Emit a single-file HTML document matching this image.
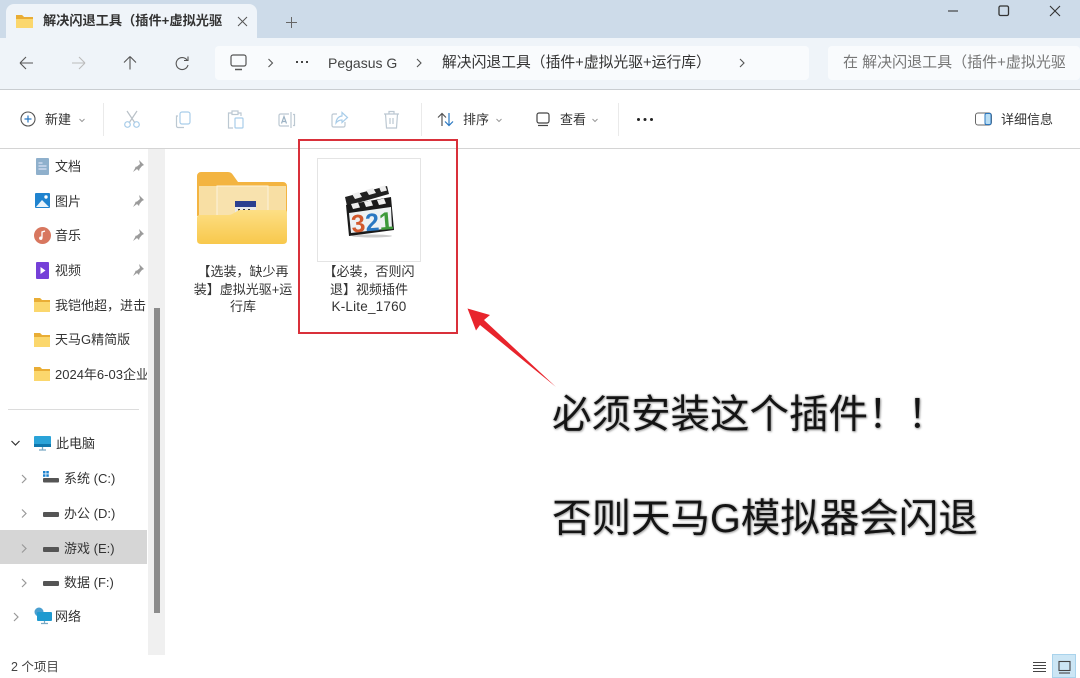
<!DOCTYPE html>
<html lang="zh"><head><meta charset="utf-8"><title>解决闪退工具</title>
<style>
html,body{margin:0;padding:0;background:#fff}
#p{position:relative;width:1080px;height:678px;overflow:hidden;background:#fff;font-family:"Liberation Sans","Noto Sans CJK SC",sans-serif;color:#2b2b2b}
.a{position:absolute}
.t{position:absolute;white-space:nowrap;font-size:13px;line-height:18px;color:#333}
svg{position:absolute;overflow:visible}
.c{text-align:center;white-space:normal;line-height:17.5px;font-size:13px}
.big{position:absolute;white-space:nowrap;font-size:39.5px;line-height:48px;color:#151515;text-shadow:0 0 2px #999,1px 1px 2px #aaa;letter-spacing:0}
</style></head><body><div id="p">
<!-- title bar -->
<div class="a" style="left:0;top:0;width:1080px;height:38px;background:#cddbe9"></div>
<div class="a" style="left:6px;top:4px;width:251px;height:34px;background:#eff4f9;border-radius:8px 8px 0 0"></div>
<svg style="left:16px;top:15px" width="17" height="13"><path d="M0 0h6l2 2h9v11H0z" fill="#fbd76d"/><path d="M0 0h6l2 2h9v2H0z" fill="#e9ad35"/></svg>
<div class="t" style="left:43px;top:12px;font-size:13.2px;font-weight:bold;color:#333">解决闪退工具（插件+虚拟光驱</div>
<svg style="left:237px;top:16px" width="11" height="11"><path d="M1 1l9 9M10 1l-9 9" stroke="#555" stroke-width="1" fill="none"/></svg>
<svg style="left:286px;top:17px" width="11" height="11"><path d="M5.500 0v11M0 5.500h11" stroke="#666" stroke-width="1" fill="none"/></svg>
<svg style="left:948px;top:5px" width="120" height="13"><path d="M0 6h10" stroke="#444" stroke-width="1.2"/><rect x="51" y="1" width="9.500" height="9.500" rx="1.500" fill="none" stroke="#333" stroke-width="1.300"/><path d="M102 1l10 10M112 1l-10 10" stroke="#333" stroke-width="1.100"/></svg>
<!-- address row -->
<div class="a" style="left:0;top:38px;width:1080px;height:51px;background:#eff4f9;border-bottom:1px solid #c9cdd1"></div>
<div class="a" style="left:215px;top:46px;width:594px;height:34px;background:#f9fbfd;border-radius:4px"></div>
<div class="a" style="left:828px;top:46px;width:252px;height:34px;background:#f9fbfd;border-radius:4px"></div>
<svg style="left:19px;top:55px" width="170" height="16" fill="none" stroke="#555" stroke-width="1.100"><path d="M1 8h13M1 8l6-6M1 8l6 6"/><path d="M53 8h13M66 8l-6-6M66 8l-6 6" stroke="#bbb"/><path d="M111 1.500v13M111 1.500l-6 6M111 1.500l6 6"/><path d="M169 5a6 6 0 1 0 1 5M170 1.500v4h-4" transform="translate(-1 0)"/></svg>
<svg style="left:230px;top:54px" width="18" height="17" fill="none" stroke="#555" stroke-width="1.200"><rect x="1" y="1" width="15" height="11" rx="2"/><path d="M5 15.500h7" stroke-width="1.500"/></svg>
<svg style="left:268px;top:58px" width="480" height="10" fill="none" stroke="#555" stroke-width="1.100"><path d="M0.500 1l4 4-4 4M149 1l4 4-4 4M472 1l4 4-4 4"/></svg>
<div class="a" style="left:296px;top:61px;width:2px;height:2px;background:#444;box-shadow:5px 0 #444,10px 0 #444"></div>
<div class="t" style="left:328px;top:54px;font-size:14px;color:#444">Pegasus G</div>
<div class="t" style="left:442px;top:54px;font-size:14.8px;color:#333">解决闪退工具（插件+虚拟光驱+运行库）</div>
<div class="a" style="left:843px;top:54px;width:222px;height:20px;overflow:hidden"><div class="t" style="left:0;top:0;font-size:15px;color:#777">在 解决闪退工具（插件+虚拟光驱+运行库）</div></div>
<!-- toolbar -->
<div class="a" style="left:0;top:148px;width:1080px;height:1px;background:#d4d4d4"></div>
<div class="a" style="left:103px;top:103px;width:1px;height:33px;background:#eaeaea"></div>
<div class="a" style="left:421px;top:103px;width:1px;height:33px;background:#eaeaea"></div>
<div class="a" style="left:618px;top:103px;width:1px;height:33px;background:#eaeaea"></div>
<svg style="left:20px;top:111px" width="16" height="16" fill="none"><circle cx="8" cy="8" r="7" stroke="#555" stroke-width="1.100"/><path d="M8 4.500v7M4.500 8h7" stroke="#2a78c2" stroke-width="1.200"/></svg>
<div class="t" style="left:45px;top:111px;font-size:13px">新建</div>
<svg style="left:79px;top:118px" width="120" height="6" fill="none" stroke="#999"><path d="M0.500 1l2.500 2.500L5.500 1"/></svg>
<svg style="left:123px;top:110px" width="18" height="19" fill="none" stroke="#a9cde9" stroke-width="1.200"><path d="M4 1l8 12M14 1l-8 12" stroke="#b9c1c8"/><circle cx="4.500" cy="14.500" r="2.800"/><circle cx="13.500" cy="14.500" r="2.800"/></svg>
<svg style="left:175px;top:111px" width="17" height="18" fill="none" stroke="#bcc8d2" stroke-width="1.200"><path d="M3 5H1.500v10a1.500 1.500 0 0 0 1.500 1.500h6"/><rect x="5" y="1" width="10" height="12" rx="2" stroke="#a9cde9"/></svg>
<svg style="left:227px;top:110px" width="18" height="19" fill="none" stroke="#bcc8d2" stroke-width="1.200"><path d="M5 3H1.500v15H6M11 3h3v3"/><rect x="5" y="1" width="6" height="3.500"/><rect x="8" y="8" width="8" height="10" rx="1" stroke="#a9cde9"/></svg>
<svg style="left:278px;top:111px" width="18" height="18" fill="none" stroke="#bcc8d2" stroke-width="1.200"><path d="M11 3H2.500A1.500 1.500 0 0 0 1 4.500v9A1.500 1.500 0 0 0 2.500 15H11M13 1v16M15 3.500h1.500v11H15"/><path d="M3.500 12.500l2.500-7 2.500 7M4.500 10.500h3.500" stroke="#9cb2c4"/></svg>
<svg style="left:331px;top:111px" width="18" height="18" fill="none" stroke="#bcc8d2" stroke-width="1.200"><path d="M6 3H2.500A1.500 1.500 0 0 0 1 4.500v10A1.500 1.500 0 0 0 2.500 16h10a1.500 1.500 0 0 0 1.500-1.500V11"/><path d="M11 1.500l5.500 5-5.500 5V9c-3 0-4.500 1-6 3 .3-4 2.500-6.500 6-7z" stroke="#a9cde9"/></svg>
<svg style="left:383px;top:110px" width="17" height="19" fill="none" stroke="#bcc8d2" stroke-width="1.200"><path d="M1 4h15M6 4V1.500h5V4M2.500 4l1 14h10l1-14M7 8v6M10 8v6"/></svg>
<svg style="left:437px;top:112px" width="18" height="15" fill="none" stroke-width="1.200"><path d="M5 14V1.500M1 5.500l4-4 4 4" stroke="#555"/><path d="M12 1v12.500M8 9.500l4 4 4-4" stroke="#2a78c2"/></svg>
<div class="t" style="left:463px;top:111px;font-size:13px">排序</div>
<svg style="left:496px;top:118px" width="7" height="5" fill="none" stroke="#999"><path d="M0.500 1l2.500 2.500L5.500 1"/></svg>
<svg style="left:536px;top:112px" width="15" height="15" fill="none" stroke="#444" stroke-width="1.200"><rect x="1" y="1" width="12" height="10" rx="2"/><path d="M2 13.500h10"/></svg>
<div class="t" style="left:560px;top:111px;font-size:13px">查看</div>
<svg style="left:592px;top:118px" width="7" height="5" fill="none" stroke="#999"><path d="M0.500 1l2.500 2.500L5.500 1"/></svg>
<div class="a" style="left:637px;top:118px;width:3px;height:3px;border-radius:50%;background:#222;box-shadow:6.500px 0 #222,13px 0 #222"></div>
<svg style="left:975px;top:112px" width="18" height="15" fill="none"><rect x="0.500" y="1" width="16" height="12" rx="2.500" stroke="#666"/><rect x="10" y="1.500" width="6" height="11" rx="1.500" fill="#b9ddf3" stroke="#2a78c2"/></svg>
<div class="t" style="left:1001px;top:111px;font-size:13px">详细信息</div>
<!-- sidebar -->
<div class="a" style="left:148px;top:149px;width:17px;height:506px;background:#f0f0f0"></div>
<div class="a" style="left:154px;top:308px;width:6px;height:305px;background:#8c8c8c"></div>
<div class="a" style="left:0;top:530px;width:147px;height:34px;background:#d6d6d6"></div>
<div class="a" style="left:8px;top:409px;width:131px;height:1px;background:#dcdcdc"></div>
<svg style="left:36px;top:158px" width="13" height="17"><rect width="13" height="17" rx="1" fill="#8fb0cc"/><path d="M2.500 5h4M2.500 8h8M2.500 11h8" stroke="#eef" /></svg>
<svg style="left:35px;top:193px" width="15" height="15"><rect width="15" height="15" rx="1" fill="#1f83cf"/><path d="M1 14l6-7 7 7z" fill="#eaf4fb"/><circle cx="11" cy="4" r="1.700" fill="#fff"/></svg>
<svg style="left:34px;top:227px" width="17" height="17"><circle cx="8.500" cy="8.500" r="8.500" fill="#d8775f"/><path d="M8 11V5l3-1" stroke="#fff" stroke-width="1.300" fill="none"/><circle cx="6.800" cy="11.200" r="1.700" fill="#fff"/></svg>
<svg style="left:36px;top:262px" width="13" height="17"><rect width="13" height="17" rx="1" fill="#7540d8"/><path d="M4.500 5v7l5-3.500z" fill="#fff"/></svg>
<svg style="left:34px;top:298px" width="16" height="14"><path d="M0 0h6l2 2h8v12H0z" fill="#fbd76d"/><path d="M0 0h6l2 2h8v2H0z" fill="#e9ad35"/></svg>
<svg style="left:34px;top:333px" width="16" height="14"><path d="M0 0h6l2 2h8v12H0z" fill="#fbd76d"/><path d="M0 0h6l2 2h8v2H0z" fill="#e9ad35"/></svg>
<svg style="left:34px;top:367px" width="16" height="14"><path d="M0 0h6l2 2h8v12H0z" fill="#fbd76d"/><path d="M0 0h6l2 2h8v2H0z" fill="#e9ad35"/></svg>
<svg style="left:132px;top:160px" width="12" height="120" fill="#9b9b9b"><path d="M7 0l5 5-2 1-2.500 3-.5 2-4-4 2-.5 3-2.500zM3.500 7.500l1.500 1.500-4 3z"/><path transform="translate(0 35)" d="M7 0l5 5-2 1-2.500 3-.5 2-4-4 2-.5 3-2.500zM3.500 7.500l1.500 1.500-4 3z"/><path transform="translate(0 69)" d="M7 0l5 5-2 1-2.500 3-.5 2-4-4 2-.5 3-2.500zM3.500 7.500l1.500 1.500-4 3z"/><path transform="translate(0 104)" d="M7 0l5 5-2 1-2.500 3-.5 2-4-4 2-.5 3-2.500zM3.500 7.500l1.500 1.500-4 3z"/></svg>
<div class="t" style="left:55px;top:158px">文档</div>
<div class="t" style="left:55px;top:193px">图片</div>
<div class="t" style="left:55px;top:227px">音乐</div>
<div class="t" style="left:55px;top:262px">视频</div>
<div class="a" style="left:55px;top:297px;width:92px;height:20px;overflow:hidden"><div class="t" style="left:0;top:0">我铠他超，进击的巨人</div></div>
<div class="t" style="left:55px;top:331px">天马G精简版</div>
<div class="a" style="left:55px;top:366px;width:92px;height:20px;overflow:hidden"><div class="t" style="left:0;top:0">2024年6-03企业版</div></div>
<svg style="left:11px;top:440px" width="10" height="7" fill="none" stroke="#333" stroke-width="1.200"><path d="M0.500 1l4 4 4-4"/></svg>
<svg style="left:34px;top:436px" width="17" height="15"><rect width="17" height="11" rx="1" fill="#2aa3d8"/><rect y="8" width="17" height="3" fill="#0f77ad"/><path d="M5 14h7M8.500 11v3" stroke="#79a9c4" stroke-width="1.300"/></svg>
<div class="t" style="left:56px;top:435px">此电脑</div>
<svg style="left:21px;top:475px" width="6" height="116" fill="none" stroke="#999" stroke-width="1.200"><path d="M1 0l4 4-4 4M1 34.500l4 4-4 4M1 69.500l4 4-4 4M1 104l4 4-4 4"/></svg>
<svg style="left:13px;top:613px" width="6" height="10" fill="none" stroke="#999" stroke-width="1.200"><path d="M1 0l4 4-4 4"/></svg>
<svg style="left:43px;top:471px" width="16" height="12"><rect x="0" y="0" width="2.500" height="2.500" fill="#1f83cf"/><rect x="3.300" y="0" width="2.500" height="2.500" fill="#1f83cf"/><rect x="0" y="3.300" width="2.500" height="2.500" fill="#1f83cf"/><rect x="3.300" y="3.300" width="2.500" height="2.500" fill="#1f83cf"/><rect y="7" width="16" height="4.500" rx="1" fill="#555"/></svg>
<div class="a" style="left:43px;top:512px;width:16px;height:5px;background:#555;border-radius:1px"></div>
<div class="a" style="left:43px;top:547px;width:16px;height:5px;background:#555;border-radius:1px"></div>
<div class="a" style="left:43px;top:581px;width:16px;height:5px;background:#555;border-radius:1px"></div>
<div class="t" style="left:64px;top:470px">系统 (C:)</div>
<div class="t" style="left:64px;top:505px">办公 (D:)</div>
<div class="t" style="left:64px;top:540px">游戏 (E:)</div>
<div class="t" style="left:64px;top:574px">数据 (F:)</div>
<svg style="left:34px;top:607px" width="18" height="18"><circle cx="5" cy="5" r="4.500" fill="#4a9fd0"/><rect x="3" y="5" width="15" height="9" rx="1" fill="#1f9ad0"/><path d="M7 16.500h7M10.500 14v2.500" stroke="#79a9c4" stroke-width="1.200"/></svg>
<div class="t" style="left:55px;top:608px">网络</div>
<div class="t" style="left:11px;top:658px;font-size:12.500px;color:#444">2 个项目</div>
<!-- view buttons -->
<svg style="left:1033px;top:661px" width="14" height="13" stroke="#444" stroke-width="1.100"><path d="M0 1.500h13M0 4.500h13M0 7.500h13M0 10.500h13"/></svg>
<div class="a" style="left:1052px;top:654px;width:24px;height:24px;background:#cce6f5;border:1px solid #a9d3ec;box-sizing:border-box"></div>
<svg style="left:1058px;top:661px" width="14" height="13" fill="none" stroke="#444" stroke-width="1.100"><rect x="1" y="0.500" width="11" height="9"/><path d="M1 12h11"/></svg>
<!-- folder -->
<svg style="left:196px;top:171px" width="92" height="74">
<defs><linearGradient id="g" x1="0" y1="0" x2="0" y2="1"><stop offset="0" stop-color="#fddf85"/><stop offset="1" stop-color="#f8c84c"/></linearGradient></defs>
<path d="M1 5a4 4 0 0 1 4-4h27a6 6 0 0 1 5 3l5 7h45a4 4 0 0 1 4 4v30H1z" fill="#f3b441"/>
<rect x="3" y="15" width="87" height="35" fill="#f8dfa4"/>
<rect x="21" y="15" width="51" height="35" fill="#f8e2ae" stroke="#fcf3dc"/>
<rect x="39" y="30" width="21" height="6" fill="#2b3f8f"/><rect x="39" y="36" width="21" height="7" fill="#e9e9e9"/><path d="M42 39h2M47 39h2M52 39h2" stroke="#333" stroke-width="2"/>
<path d="M1 47q0-3 3-3h28q3 0 6-2l5-3h45q3 0 3 3v27q0 4-4 4H5q-4 0-4-4z" fill="url(#g)"/>
</svg>
<div class="t c" style="left:190px;top:263px;width:106px">【选装，缺少再装】虚拟光驱+运行库</div>
<!-- thumbnail -->
<div class="a" style="left:317px;top:158px;width:104px;height:104px;box-sizing:border-box;border:1px solid #e4e4e4;background:#fff"></div>
<svg style="left:0;top:0" width="1080" height="678">
<ellipse cx="372" cy="236" rx="20" ry="1.500" fill="#ccc"/>
<path d="M345 197L387 186 389 194 347 206z" fill="#222"/>
<path d="M352 194l7-2 3 5-7 2zM366 190l7-2 3 5-7 2zM379 187l6-1.500 2 5-6 1.500z" fill="#eee"/>
<path d="M346 205L391 197 394 230 349 236z" fill="#1a1a1a"/>
<path d="M351 204l7-1.500 2 5-7 1.500zM364 202l7-1.500 2 5-7 1.500zM377 200l7-1.500 2 5-7 1.500z" fill="#eee"/>
<path d="M349 213L391 207 392 228 351 233z" fill="#eef2f3"/>
<g font-family="Liberation Sans,sans-serif" font-size="25" font-weight="bold" transform="rotate(-5 370 220)">
<text x="351" y="231" fill="#d2592c">3</text>
<text x="365" y="231" fill="#2a78c2">2</text>
<text x="379" y="231" fill="#3d9a3a">1</text>
</g>
</svg>
<div class="t c" style="left:322px;top:263px;width:94px">【必装，否则闪退】视频插件<br><span style="font-size:13.5px;letter-spacing:.2px">K-Lite_1760</span></div>
<!-- red box -->
<div class="a" style="left:298px;top:139px;width:160px;height:195px;box-sizing:border-box;border:2px solid #d9303a"></div>
<!-- arrow -->
<svg style="left:460px;top:300px" width="100" height="90"><path d="M7.500 8.500L30 15 24 20 96 87 20 25 16 30.500z" fill="#e8242c"/></svg>
<!-- big text -->
<div class="big" style="left:552px;top:391px">必须安装这个插件！！</div>
<div class="big" style="left:552px;top:495px">否则天马G模拟器会闪退</div>
</div></body></html>
